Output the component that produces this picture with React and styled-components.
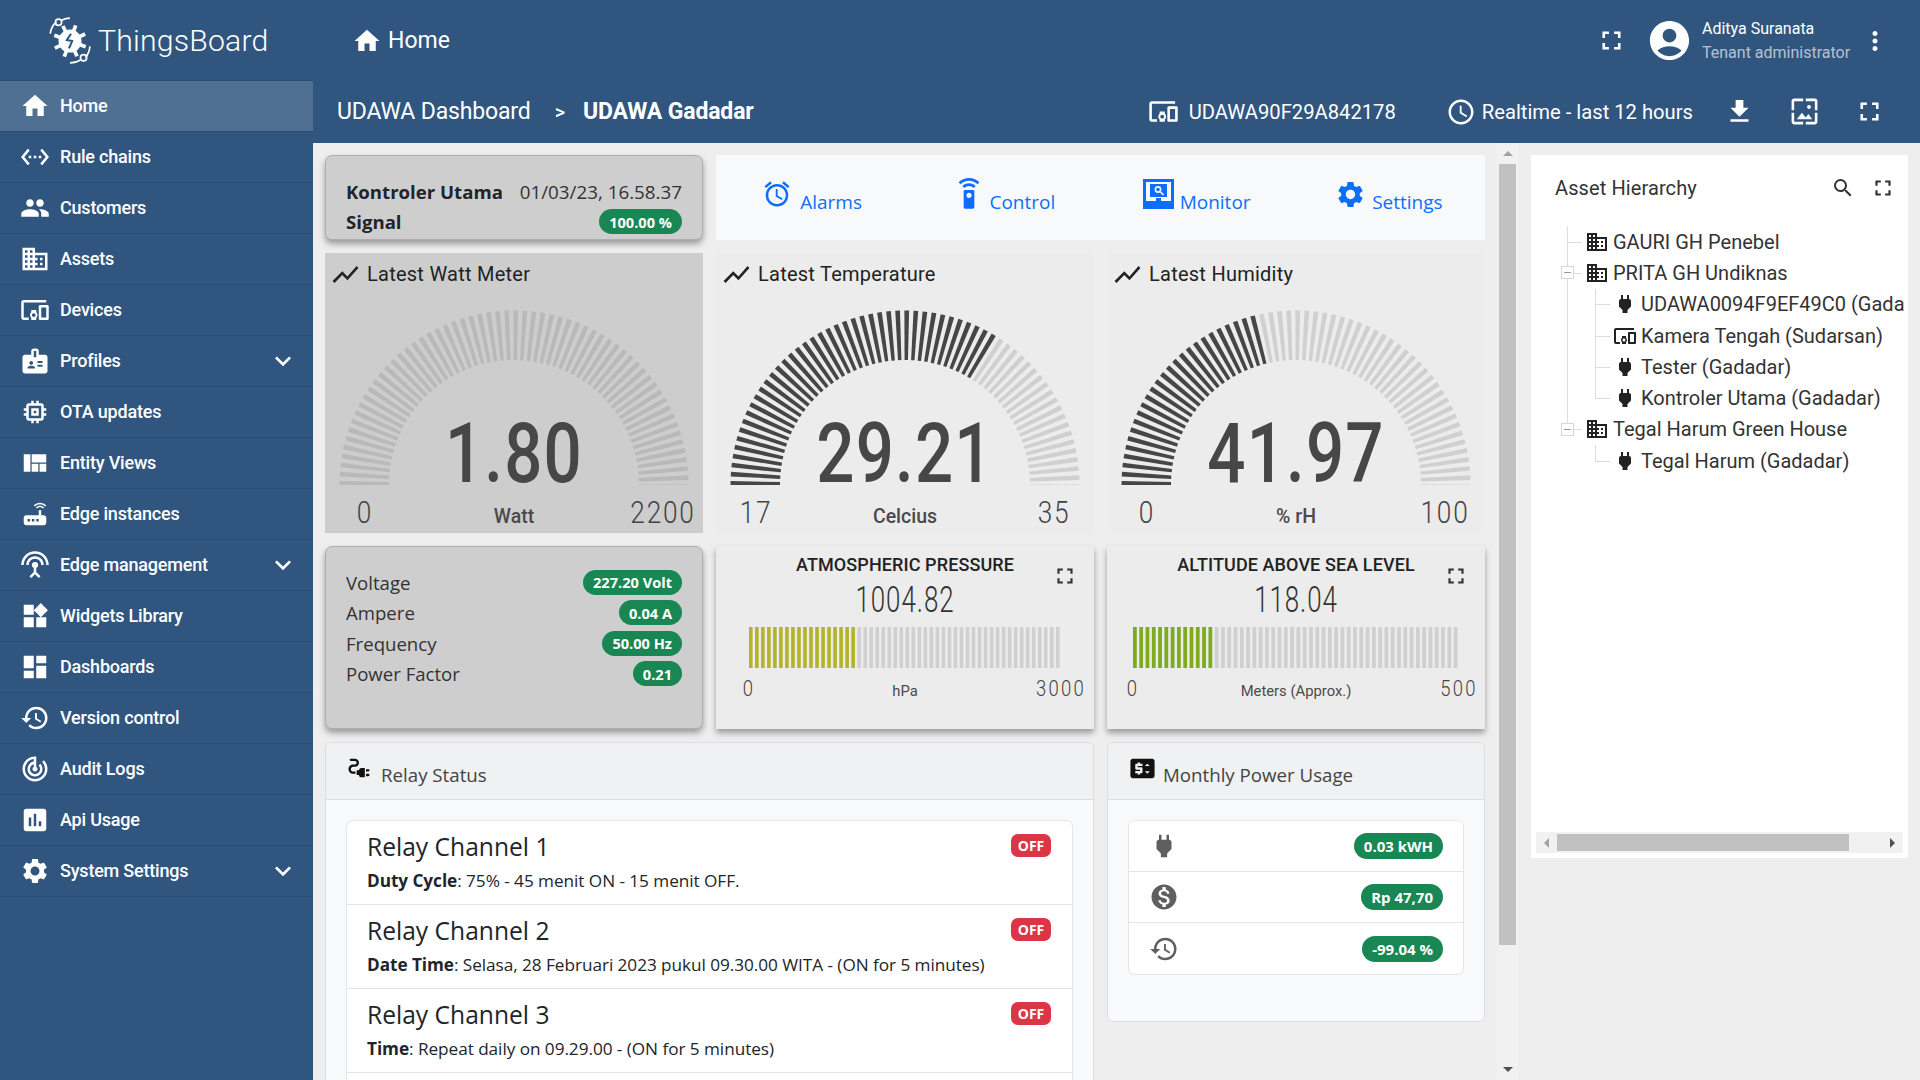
import styled, { createGlobalStyle } from "styled-components";
import {
  MdHome, MdSettingsEthernet, MdPeople, MdDomain, MdDevicesOther, MdBadge, MdMemory, MdViewQuilt,
  MdRouter, MdSettingsInputAntenna, MdWidgets, MdDashboard, MdHistory, MdTrackChanges, MdAssessment,
  MdSettings, MdExpandMore, MdFullscreen, MdAccountCircle, MdMoreVert, MdFileDownload, MdAccessTime,
  MdWallpaper, MdShowChart, MdSearch, MdPower, MdAlarm, MdSettingsRemote, MdElectricalServices,
  MdPriceChange, MdMonetizationOn,
} from "react-icons/md";

const GlobalStyle = createGlobalStyle`
  html, body {
    margin: 0;
    height: 100%;
    overflow: hidden;
    background: #eeeeee;
    font-family: Roboto, "Liberation Sans", sans-serif;
  }
  * { box-sizing: border-box; }
`;

const Page = styled.div`
  display: flex;
  width: 1920px;
  height: 1080px;
  overflow: hidden;
`;

/* ---------- sidebar ---------- */

const Sidebar = styled.aside`
  width: 313px;
  flex: none;
  background: #305680;
  color: #fff;
`;

const LogoBar = styled.div`
  height: 81px;
  display: flex;
  align-items: center;
  padding-left: 46px;
  gap: 4px;
  border-bottom: 1px solid #2a4c72;
`;

const LogoText = styled.span`
  font-size: 30.2px;
  font-weight: 300;
  letter-spacing: 0.2px;
`;

const MenuRow = styled.div`
  height: 51px;
  display: flex;
  align-items: center;
  gap: 10px;
  padding: 0 14px 1px 20px;
  font-size: 18px;
  font-weight: 500;
  letter-spacing: -0.2px;
  border-bottom: 1px solid #2a4c72;
  background: ${(p) => (p.$active ? "#507093" : "transparent")};
`;

const MenuChevron = styled(MdExpandMore)`
  margin-left: auto;
`;

/* ---------- header ---------- */

const Right = styled.div`
  flex: 1;
  min-width: 0;
  display: flex;
  flex-direction: column;
`;

const Header = styled.header`
  height: 143px;
  flex: none;
  background: #305680;
  color: #fff;
`;

const TopBar = styled.div`
  height: 81px;
  display: flex;
  align-items: center;
  padding-left: 39px;
`;

const PageTitle = styled.span`
  font-size: 23px;
  margin-left: 6px;
`;

const UserBox = styled.div`
  margin-left: auto;
  display: flex;
  align-items: center;
`;

const UserText = styled.div`
  width: 158px;
  margin-left: 9px;
  font-size: 16px;
  line-height: 24px;
`;

const UserRole = styled.div`
  color: rgba(255, 255, 255, 0.65);
`;

const SubBar = styled.div`
  height: 62px;
  display: flex;
  align-items: center;
  padding: 0 35px 1px 24px;
  font-size: 23px;
`;

const Crumb = styled.span`
  font-weight: ${(p) => (p.$strong ? 700 : 400)};
  letter-spacing: -0.15px;
`;

const CrumbSep = styled.span`
  margin: 0 18px 0 24px;
  font-size: 20px;
  font-weight: 500;
`;

const SubRight = styled.div`
  margin-left: auto;
  display: flex;
  align-items: center;
  font-size: 20.2px;
`;

const DeviceName = styled.span`
  margin: 0 50px 0 10px;
`;

const RangeLabel = styled.span`
  margin: 0 31px 0 6px;
`;

const BarIcon = styled.span`
  display: flex;
  margin-left: ${(p) => p.$gap || 0}px;
`;

/* ---------- body ---------- */

const Body = styled.div`
  flex: 1;
  min-height: 0;
  display: flex;
`;

const Dash = styled.main`
  width: 1184px;
  flex: none;
  overflow: hidden;
  padding: 12px 12px 0;
  display: grid;
  grid-template-columns: repeat(3, 378px);
  grid-template-rows: 85px 280px 183px 400px;
  gap: 13px;
`;

const VScroll = styled.div`
  width: 21px;
  flex: none;
  display: flex;
  flex-direction: column;
  align-items: center;
  background: #f1f1f1;
`;

const ScrollBtn = styled.div`
  height: 21px;
  width: 100%;
  flex: none;
  display: flex;
  align-items: center;
  justify-content: center;
  margin-top: ${(p) => (p.$end ? "auto" : 0)};
`;

const VThumb = styled.div`
  width: 17px;
  height: 781px;
  background: #c1c1c1;
`;

const ArrowGlyph = styled.span`
  width: 0;
  height: 0;
  border: 5px solid transparent;
  ${(p) => p.$dir === "up" && `border-bottom-color: ${p.$color}; margin-top: -5px;`}
  ${(p) => p.$dir === "down" && `border-top-color: ${p.$color}; margin-top: 5px;`}
  ${(p) => p.$dir === "left" && `border-right-color: ${p.$color}; margin-left: -5px;`}
  ${(p) => p.$dir === "right" && `border-left-color: ${p.$color}; margin-left: 5px;`}
`;

/* ---------- dashboard widgets ---------- */

const StatusCard = styled.div`
  background: #cecece;
  border: 1px solid #aeaeae;
  border-radius: 7px;
  box-shadow: 0 4px 6px rgba(0, 0, 0, 0.35);
  font-family: "Open Sans", sans-serif;
  font-size: 18.6px;
  color: #212529;
  padding: ${(p) => p.$pad};
`;

const StatusRow = styled.div`
  display: flex;
  align-items: center;
  justify-content: space-between;
  height: ${(p) => p.$h}px;
`;

const StatusName = styled.span`
  font-weight: ${(p) => (p.$bold ? 700 : 400)};
  color: ${(p) => (p.$bold ? "#212529" : "#333")};
`;

const StatusDate = styled.span`
  color: #333;
  font-size: 18.8px;
`;

const Pill = styled.span`
  display: inline-flex;
  align-items: center;
  height: 25px;
  padding: 0 10px;
  border-radius: 13px;
  background: #198754;
  color: #fff;
  font-family: "Open Sans", sans-serif;
  font-size: 14.6px;
  font-weight: 700;
  white-space: nowrap;
`;

const NavPanel = styled.nav`
  grid-column: 2 / span 2;
  background: #f8f9fa;
  display: grid;
  grid-template-columns: repeat(4, 1fr);
  font-family: "Open Sans", sans-serif;
  font-size: 19px;
  color: #0d6efd;
`;

const NavTab = styled.div`
  display: flex;
  align-items: center;
  justify-content: center;
  gap: ${(p) => p.$gap}px;
`;

const NavIcon = styled.span`
  display: flex;
  margin-top: -7px;
`;

const NavLabel = styled.span`
  margin-top: 9px;
`;

const GaugeCard = styled.section`
  background: ${(p) => (p.$dim ? "#cdcdcd" : "#ececec")};
`;

const GaugeTitle = styled.div`
  height: 57px;
  display: flex;
  align-items: flex-start;
  gap: 6px;
  padding: 6px 0 0 5px;
  font-size: 20px;
  letter-spacing: 0.25px;
  line-height: 31px;
  color: #222;
`;

const Dial = styled.div`
  position: relative;
  height: 175px;
`;

const DialSvg = styled.svg`
  display: block;
`;

const DialValue = styled.div`
  position: absolute;
  left: 0;
  right: 0;
  bottom: -11px;
  text-align: center;
  font-size: 84px;
  font-weight: 500;
  line-height: 1;
  letter-spacing: 1.5px;
  color: #474747;
  transform: scaleX(0.8);
`;

const ScaleRow = styled.div`
  display: grid;
  grid-template-columns: ${(p) => p.$edge}px 1fr ${(p) => p.$edge}px;
  align-items: center;
  text-align: center;
  color: #444;
`;

const GaugeScale = styled(ScaleRow)`
  padding-top: 11px;
`;

const ScaleLimit = styled.span`
  font-size: ${(p) => p.$size}px;
  line-height: ${(p) => p.$size}px;
  font-weight: 300;
  letter-spacing: ${(p) => p.$spacing}px;
  white-space: nowrap;
  transform: scaleX(0.82);
`;

const ScaleUnit = styled.span`
  margin-top: ${(p) => p.$top}px;
  font-size: ${(p) => p.$size}px;
  font-weight: ${(p) => p.$weight};
  color: #4a4a4a;
  white-space: nowrap;
`;

const BarCard = styled.section`
  position: relative;
  background: #ececec;
  box-shadow: 0 4px 6px rgba(0, 0, 0, 0.35);
  padding-top: 8px;
`;

const BarTitle = styled.div`
  text-align: center;
  font-size: 18px;
  font-weight: 500;
  letter-spacing: 0.1px;
  line-height: 22px;
  color: #222;
`;

const BarValue = styled.div`
  margin-top: 6px;
  text-align: center;
  font-size: 36px;
  font-weight: 300;
  line-height: 36px;
  letter-spacing: 1.3px;
  color: #333;
  transform: scaleX(0.72);
`;

const BarTrack = styled.svg`
  display: block;
  margin: 9px auto 8px;
`;

const CornerIcon = styled(MdFullscreen)`
  position: absolute;
  top: 17px;
  right: 16px;
  color: #333;
`;

const Panel = styled.section`
  grid-column: ${(p) => p.$column};
  height: ${(p) => p.$height || "auto"};
  align-self: start;
  background: #f8f9fa;
  border: 1px solid #dcdde0;
  border-radius: 6px;
  font-family: "Open Sans", sans-serif;
  overflow: hidden;
`;

const PanelHead = styled.header`
  height: 57px;
  display: flex;
  align-items: flex-start;
  background: #f0f1f3;
  border-bottom: 1px solid #dcdde0;
  font-size: 18.7px;
  color: #444;
`;

const PanelIcon = styled.span`
  display: flex;
  margin: 11px ${(p) => p.$gap}px 0 ${(p) => p.$left}px;
  color: #111;
`;

const PanelTitle = styled.span`
  margin-top: 20px;
  line-height: 24px;
`;

const ListBox = styled.div`
  margin: 20px 20px 0;
  background: #fff;
  border: 1px solid #e4e5e7;
  border-radius: 7px;
`;

const RelayRow = styled.div`
  position: relative;
  height: 84px;
  padding: 11px 20px 0;
  border-bottom: 1px solid #e4e5e7;
  color: #212529;
`;

const RelayName = styled.div`
  font-size: 24.6px;
  font-weight: 500;
  line-height: 29px;
  margin-bottom: 8px;
`;

const RelayInfo = styled.div`
  font-size: 17.2px;
  line-height: 24px;
  letter-spacing: -0.05px;
  b { font-weight: 700; }
`;

const OffBadge = styled.span`
  position: absolute;
  top: 13px;
  right: 21px;
  width: 40px;
  height: 23px;
  border-radius: 7px;
  background: #dc3545;
  color: #fff;
  font-size: 14px;
  font-weight: 700;
  display: flex;
  align-items: center;
  justify-content: center;
`;

const UsageRow = styled.div`
  height: 51px;
  display: flex;
  align-items: center;
  justify-content: space-between;
  padding: 0 20px 0 20px;
  color: #5f5f5f;
  border-bottom: ${(p) => (p.$last ? "none" : "1px solid #e4e5e7")};
`;

const UsagePill = styled(Pill)`
  height: 26px;
  font-size: 15px;
`;

/* ---------- asset hierarchy ---------- */

const TreePanel = styled.aside`
  width: 377px;
  height: 703px;
  flex: none;
  margin: 12px 0 0 13px;
  background: #fff;
  display: flex;
  flex-direction: column;
`;

const TreeHead = styled.div`
  height: 66px;
  flex: none;
  display: flex;
  align-items: center;
  padding: 0 12px 0 24px;
  font-size: 20px;
  letter-spacing: 0.1px;
  color: #333;
`;

const TreeTools = styled.div`
  margin-left: auto;
  display: flex;
  align-items: center;
  gap: 15px;
`;

const TreeBody = styled.div`
  flex: 1;
  overflow: hidden;
  padding-top: 5px;
  margin-right: 4px;
`;

const TreeRow = styled.div`
  display: flex;
  align-items: center;
  height: 31.3px;
  font-size: 20px;
  color: #333;
  white-space: nowrap;
`;

const Branch = styled.div`
  position: relative;
  width: ${(p) => (p.$level === 1 ? 56 : 83)}px;
  height: 100%;
  flex: none;
  &::before {
    content: "";
    position: absolute;
    left: ${(p) => (p.$level === 1 ? 36 : 64)}px;
    top: 0;
    width: 1px;
    height: ${(p) => (p.$last ? "50%" : "100%")};
    background: #dcdcdc;
  }
  &::after {
    content: "";
    position: absolute;
    left: ${(p) => (p.$level === 1 ? 36 : 64)}px;
    top: 50%;
    width: 15px;
    height: 1px;
    background: #dcdcdc;
  }
`;

const TrunkLine = styled.span`
  position: absolute;
  left: 36px;
  top: 0;
  width: 1px;
  height: 100%;
  background: #dcdcdc;
`;

const Toggle = styled.span`
  position: absolute;
  z-index: 1;
  left: 30px;
  top: 9px;
  width: 13px;
  height: 13px;
  background: #fff;
  border: 1px solid #d6d6d6;
  display: flex;
  align-items: center;
  justify-content: center;
  &::before {
    content: "";
    width: 7px;
    height: 1px;
    background: #999;
  }
`;

const TreeIcon = styled.span`
  display: flex;
  justify-content: center;
  flex: none;
  width: ${(p) => p.$w}px;
  margin-right: ${(p) => p.$gap}px;
  color: #222;
  svg { flex: none; }
`;

const HScroll = styled.div`
  height: 21px;
  flex: none;
  margin: 0 5px 5px;
  background: #f1f1f1;
  display: flex;
  align-items: center;
`;

const HScrollBtn = styled.div`
  width: 21px;
  height: 100%;
  flex: none;
  display: flex;
  align-items: center;
  justify-content: center;
  margin-left: ${(p) => (p.$end ? "auto" : 0)};
`;

const HThumb = styled.div`
  width: 292px;
  height: 17px;
  background: #c1c1c1;
`;

/* ---------- drawings ---------- */

function Logo() {
  const spikes = [0, 45, 90, 135, 180, 225, 270, 315];
  return (
    <svg width="48" height="48" viewBox="0 0 46 46" fill="none" stroke="#fff">
      <path d="M4 17 C5 11 7 8 10 6 M15 4 C17 3 20 2 23 2" strokeWidth="1.6" />
      <circle cx="12" cy="6" r="3" strokeWidth="1.6" />
      <path d="M42 29 C42 34 40 37 38 40 M33 42 C30 44 27 45 23 45" strokeWidth="1.6" />
      <circle cx="36" cy="40" r="3" strokeWidth="1.6" />
      <circle cx="23" cy="24" r="11" fill="#fff" stroke="none" />
      {spikes.map((a) => (
        <line key={a} x1="23" y1="24" x2="23" y2="8" strokeWidth="3.5" transform={`rotate(${a + 20} 23 24)`} />
      ))}
      <path d="M24 17 L20 23 L25 24 L22 31" stroke="#305680" strokeWidth="2" />
    </svg>
  );
}

function MonitorIcon() {
  return (
    <svg width="31" height="30" viewBox="0 0 31 30">
      <rect width="31" height="30" fill="#0d6efd" />
      <rect x="3" y="3" width="25" height="19" fill="#f8f9fa" />
      <rect x="7" y="5" width="17" height="13" fill="#0d6efd" />
      <circle cx="15" cy="10.5" r="3.4" fill="#f8f9fa" />
      <circle cx="15" cy="10.5" r="1.8" fill="#0d6efd" />
      <line x1="17.5" y1="13" x2="20.5" y2="16" stroke="#f8f9fa" strokeWidth="1.6" />
      <rect x="13" y="19" width="5" height="3" fill="#0d6efd" />
    </svg>
  );
}

function DialTicks({ value, track, fill }) {
  const cx = 189;
  const cy = 175;
  const pt = (r, deg) => {
    const a = (deg * Math.PI) / 180;
    return `${(cx - r * Math.cos(a)).toFixed(2)},${(cy - r * Math.sin(a)).toFixed(2)}`;
  };
  const ticks = [];
  for (let i = 0; i <= 60; i++) {
    const from = i * 3 - 0.2;
    const to = i * 3 + 1.35;
    ticks.push(
      <polygon
        key={i}
        points={`${pt(174.5, from)} ${pt(174.5, to)} ${pt(125, to)} ${pt(125, from)}`}
        fill={i / 60 <= value && value > 0.01 ? fill : track}
      />
    );
  }
  return (
    <DialSvg width="378" height="175" viewBox="0 0 378 175">
      {ticks}
    </DialSvg>
  );
}

function BarTicks({ width, value, fill }) {
  const count = 52;
  const pitch = width / count;
  const bars = [];
  for (let i = 0; i < count; i++) {
    bars.push(
      <rect key={i} x={i * pitch} y="0" width={pitch * 0.6} height="41" fill={i / count < value ? fill : "#d0d0d0"} />
    );
  }
  return (
    <BarTrack width={width} height="41" viewBox={`0 0 ${width} 41`}>
      {bars}
    </BarTrack>
  );
}

/* ---------- data ---------- */

const menu = [
  { label: "Home", icon: MdHome, active: true },
  { label: "Rule chains", icon: MdSettingsEthernet },
  { label: "Customers", icon: MdPeople },
  { label: "Assets", icon: MdDomain },
  { label: "Devices", icon: MdDevicesOther },
  { label: "Profiles", icon: MdBadge, more: true },
  { label: "OTA updates", icon: MdMemory },
  { label: "Entity Views", icon: MdViewQuilt },
  { label: "Edge instances", icon: MdRouter },
  { label: "Edge management", icon: MdSettingsInputAntenna, more: true },
  { label: "Widgets Library", icon: MdWidgets },
  { label: "Dashboards", icon: MdDashboard },
  { label: "Version control", icon: MdHistory },
  { label: "Audit Logs", icon: MdTrackChanges },
  { label: "Api Usage", icon: MdAssessment },
  { label: "System Settings", icon: MdSettings, more: true },
];

const gauges = [
  { title: "Latest Watt Meter", value: "1.80", ratio: 0.0008, min: "0", max: "2200", unit: "Watt", dim: true },
  { title: "Latest Temperature", value: "29.21", ratio: 0.678, min: "17", max: "35", unit: "Celcius" },
  { title: "Latest Humidity", value: "41.97", ratio: 0.4197, min: "0", max: "100", unit: "% rH" },
];

const meters = [
  { label: "Voltage", value: "227.20 Volt" },
  { label: "Ampere", value: "0.04 A" },
  { label: "Frequency", value: "50.00 Hz" },
  { label: "Power Factor", value: "0.21" },
];

const bars = [
  { title: "ATMOSPHERIC PRESSURE", value: "1004.82", ratio: 0.335, fill: "#b4b42a", width: 313, edge: 66, max: "3000", unit: "hPa" },
  { title: "ALTITUDE ABOVE SEA LEVEL", value: "118.04", ratio: 0.236, fill: "#7fab1e", width: 327, edge: 52, max: "500", unit: "Meters (Approx.)" },
];

const relays = [
  { name: "Relay Channel 1", key: "Duty Cycle", text: "75% - 45 menit ON - 15 menit OFF." },
  { name: "Relay Channel 2", key: "Date Time", text: "Selasa, 28 Februari 2023 pukul 09.30.00 WITA - (ON for 5 minutes)" },
  { name: "Relay Channel 3", key: "Time", text: "Repeat daily on 09.29.00 - (ON for 5 minutes)" },
];

const tree = [
  { label: "GAURI GH Penebel", level: 1, icon: "asset", top: true },
  { label: "PRITA GH Undiknas", level: 1, icon: "asset", open: true },
  { label: "UDAWA0094F9EF49C0 (Gadadar)", level: 2, icon: "plug", trunk: true },
  { label: "Kamera Tengah (Sudarsan)", level: 2, icon: "device", trunk: true },
  { label: "Tester (Gadadar)", level: 2, icon: "plug", trunk: true },
  { label: "Kontroler Utama (Gadadar)", level: 2, icon: "plug", trunk: true, last: true },
  { label: "Tegal Harum Green House", level: 1, icon: "asset", open: true, last: true },
  { label: "Tegal Harum (Gadadar)", level: 2, icon: "plug", last: true },
];

function TreeNode({ node }) {
  const Icon = node.icon === "asset" ? MdDomain : node.icon === "device" ? MdDevicesOther : MdPower;
  return (
    <TreeRow>
      <Branch $level={node.level} $last={node.last}>
        {node.trunk && <TrunkLine />}
        {node.open && <Toggle />}
      </Branch>
      <TreeIcon $w={node.level === 1 ? 20 : 22} $gap={node.level === 1 ? 6 : 5}>
        <Icon size={24} />
      </TreeIcon>
      {node.label}
    </TreeRow>
  );
}

export default function App() {
  return (
    <Page>
      <GlobalStyle />
      <Sidebar>
        <LogoBar>
          <Logo />
          <LogoText>ThingsBoard</LogoText>
        </LogoBar>
        {menu.map((m) => (
          <MenuRow key={m.label} $active={m.active}>
            <m.icon size={30} />
            {m.label}
            {m.more && <MenuChevron size={32} />}
          </MenuRow>
        ))}
      </Sidebar>

      <Right>
        <Header>
          <TopBar>
            <MdHome size={30} />
            <PageTitle>Home</PageTitle>
            <UserBox>
              <MdFullscreen size={31} />
              <BarIcon $gap={19}>
                <MdAccountCircle size={47} />
              </BarIcon>
              <UserText>
                <div>Aditya Suranata</div>
                <UserRole>Tenant administrator</UserRole>
              </UserText>
              <MdMoreVert size={30} />
              <BarIcon $gap={30} />
            </UserBox>
          </TopBar>
          <SubBar>
            <Crumb>UDAWA Dashboard</Crumb>
            <CrumbSep>&gt;</CrumbSep>
            <Crumb $strong>UDAWA Gadadar</Crumb>
            <SubRight>
              <MdDevicesOther size={31} />
              <DeviceName>UDAWA90F29A842178</DeviceName>
              <MdAccessTime size={30} />
              <RangeLabel>Realtime - last 12 hours</RangeLabel>
              <MdFileDownload size={31} />
              <BarIcon $gap={34}>
                <MdWallpaper size={31} />
              </BarIcon>
              <BarIcon $gap={34}>
                <MdFullscreen size={31} />
              </BarIcon>
            </SubRight>
          </SubBar>
        </Header>

        <Body>
          <Dash>
            <StatusCard $pad="19px 20px 0">
              <StatusRow $h={33}>
                <StatusName $bold>Kontroler Utama</StatusName>
                <StatusDate>01/03/23, 16.58.37</StatusDate>
              </StatusRow>
              <StatusRow $h={27}>
                <StatusName $bold>Signal</StatusName>
                <Pill>100.00 %</Pill>
              </StatusRow>
            </StatusCard>

            <NavPanel>
              <NavTab $gap={8}>
                <NavIcon><MdAlarm size={30} /></NavIcon>
                <NavLabel>Alarms</NavLabel>
              </NavTab>
              <NavTab $gap={4}>
                <NavIcon><MdSettingsRemote size={32} /></NavIcon>
                <NavLabel>Control</NavLabel>
              </NavTab>
              <NavTab $gap={6}>
                <NavIcon><MonitorIcon /></NavIcon>
                <NavLabel>Monitor</NavLabel>
              </NavTab>
              <NavTab $gap={6}>
                <NavIcon><MdSettings size={31} /></NavIcon>
                <NavLabel>Settings</NavLabel>
              </NavTab>
            </NavPanel>

            {gauges.map((g) => (
              <GaugeCard key={g.title} $dim={g.dim}>
                <GaugeTitle>
                  <MdShowChart size={31} />
                  {g.title}
                </GaugeTitle>
                <Dial>
                  <DialTicks value={g.ratio} track={g.dim ? "#b9b9b9" : "#d0d0d0"} fill="#464646" />
                  <DialValue>{g.value}</DialValue>
                </Dial>
                <GaugeScale $edge={80}>
                  <ScaleLimit $size={32} $spacing={2.2}>{g.min}</ScaleLimit>
                  <ScaleUnit $size={19.5} $weight={500} $top={8}>{g.unit}</ScaleUnit>
                  <ScaleLimit $size={32} $spacing={2.2}>{g.max}</ScaleLimit>
                </GaugeScale>
              </GaugeCard>
            ))}

            <StatusCard $pad="20px 20px 0">
              {meters.map((m) => (
                <StatusRow key={m.label} $h={30.5}>
                  <StatusName>{m.label}</StatusName>
                  <Pill>{m.value}</Pill>
                </StatusRow>
              ))}
            </StatusCard>

            {bars.map((b) => (
              <BarCard key={b.title}>
                <BarTitle>{b.title}</BarTitle>
                <CornerIcon size={26} />
                <BarValue>{b.value}</BarValue>
                <BarTicks width={b.width} value={b.ratio} fill={b.fill} />
                <ScaleRow $edge={b.edge}>
                  <ScaleLimit $size={22.5} $spacing={2.8}>0</ScaleLimit>
                  <ScaleUnit $size={14.8} $weight={400} $top={6}>{b.unit}</ScaleUnit>
                  <ScaleLimit $size={22.5} $spacing={2.8}>{b.max}</ScaleLimit>
                </ScaleRow>
              </BarCard>
            ))}

            <Panel $column="1 / span 2">
              <PanelHead>
                <PanelIcon $left={19} $gap={8}><MdElectricalServices size={28} /></PanelIcon>
                <PanelTitle>Relay Status</PanelTitle>
              </PanelHead>
              <ListBox>
                {relays.map((r) => (
                  <RelayRow key={r.name}>
                    <RelayName>{r.name}</RelayName>
                    <RelayInfo><b>{r.key}</b>: {r.text}</RelayInfo>
                    <OffBadge>OFF</OffBadge>
                  </RelayRow>
                ))}
                <RelayRow />
              </ListBox>
            </Panel>

            <Panel $column="3" $height="280px">
              <PanelHead>
                <PanelIcon $left={20} $gap={6}><MdPriceChange size={29} /></PanelIcon>
                <PanelTitle>Monthly Power Usage</PanelTitle>
              </PanelHead>
              <ListBox>
                <UsageRow>
                  <MdPower size={30} />
                  <UsagePill>0.03 kWH</UsagePill>
                </UsageRow>
                <UsageRow>
                  <MdMonetizationOn size={30} />
                  <UsagePill>Rp 47,70</UsagePill>
                </UsageRow>
                <UsageRow $last>
                  <MdHistory size={30} />
                  <UsagePill>-99.04 %</UsagePill>
                </UsageRow>
              </ListBox>
            </Panel>
          </Dash>

          <VScroll>
            <ScrollBtn><ArrowGlyph $dir="up" $color="#a3a3a3" /></ScrollBtn>
            <VThumb />
            <ScrollBtn $end><ArrowGlyph $dir="down" $color="#505050" /></ScrollBtn>
          </VScroll>

          <TreePanel>
            <TreeHead>
              Asset Hierarchy
              <TreeTools>
                <MdSearch size={24} />
                <MdFullscreen size={26} />
              </TreeTools>
            </TreeHead>
            <TreeBody>
              {tree.map((n) => (
                <TreeNode key={n.label} node={n} />
              ))}
            </TreeBody>
            <HScroll>
              <HScrollBtn><ArrowGlyph $dir="left" $color="#a3a3a3" /></HScrollBtn>
              <HThumb />
              <HScrollBtn $end><ArrowGlyph $dir="right" $color="#505050" /></HScrollBtn>
            </HScroll>
          </TreePanel>
        </Body>
      </Right>
    </Page>
  );
}
